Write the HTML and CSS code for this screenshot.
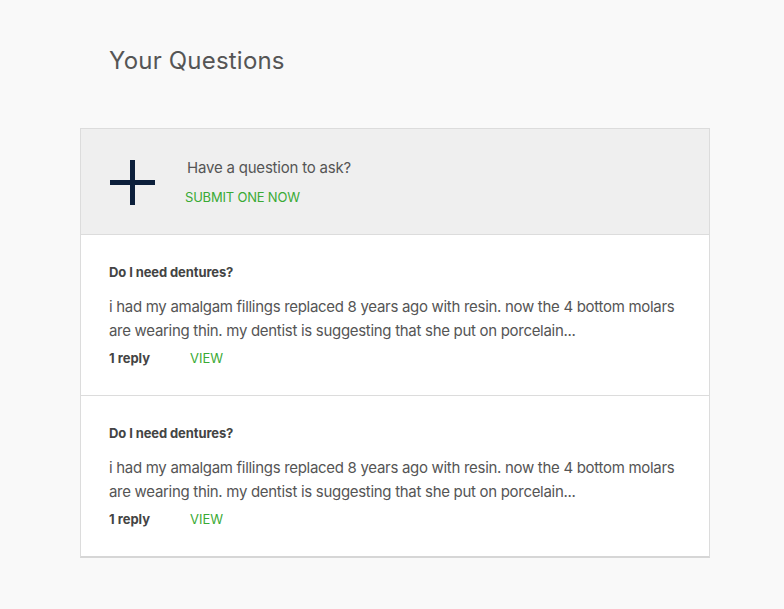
FILE: index.html
```html
<!DOCTYPE html>
<html>
<head>
<meta charset="utf-8">
<link rel="stylesheet" href="styles.css">
</head>
<body>
<div class="page">
  <h1 class="title">Your Questions</h1>
  <div class="card">
    <div class="ask">
      <svg class="plus" width="45" height="45" viewBox="0 0 45 45"><rect x="20" y="0" width="5" height="45" fill="#0c1f3b"/><rect x="0" y="20" width="45" height="5" fill="#0c1f3b"/></svg>
      <div class="ask-text">
        <div class="ask-q">Have a question to ask?</div>
        <a class="green ask-link">SUBMIT ONE NOW</a>
      </div>
    </div>
    <div class="item">
      <div class="item-title">Do I need dentures?</div>
      <p class="item-body">i had my amalgam fillings replaced 8 years ago with resin. now the 4 bottom molars are wearing thin. my dentist is suggesting that she put on porcelain...</p>
      <div class="item-meta"><span class="reply">1 reply</span><a class="green view">VIEW</a></div>
    </div>
    <div class="item">
      <div class="item-title">Do I need dentures?</div>
      <p class="item-body">i had my amalgam fillings replaced 8 years ago with resin. now the 4 bottom molars are wearing thin. my dentist is suggesting that she put on porcelain...</p>
      <div class="item-meta"><span class="reply">1 reply</span><a class="green view">VIEW</a></div>
    </div>
  </div>
</div>
</body>
</html>
```
FILE: styles.css
```css
html, body { margin: 0; padding: 0; }
body { background: #f9f9f9; font-family: Inter, "Open Sans", sans-serif; color: #555; }
.page { padding: 45px 74px 0 80px; width: 630px; }
.title { margin: 0 0 51px 29px; font-size: 24px; font-weight: 400; color: #555; line-height: 32px; letter-spacing: 0.2px; }
.card { background: #fff; border: 1px solid #dcdcdc; border-bottom: 2px solid #d6d6d6; }
.ask { background: #efefef; height: 105px; display: flex; align-items: flex-start; border-bottom: 1px solid #dcdcdc; }
.plus { margin: 31px 0 0 29px; }
.ask-text { margin: 29px 0 0 32px; }
.ask-q { font-size: 15px; color: #555; line-height: 20px; letter-spacing: -0.2px; }
.ask-link { display: block; margin-top: 11px; font-size: 13px; margin-left: -2px; letter-spacing: -0.2px; }
.green { color: #3aaa35; text-decoration: none; }
.item { padding: 28px 28px 28px 28px; height: 104px; border-bottom: 1px solid #dcdcdc; }
.item:last-child { border-bottom: none; }
.item-title { font-size: 13px; font-weight: 700; color: #444; line-height: 16px; margin-top: 1px; letter-spacing: -0.1px; }
.item-body { margin: 15px 0 0; font-size: 15px; line-height: 24px; color: #555; letter-spacing: -0.3px; }
.item-meta { margin-top: 6px; font-size: 13px; line-height: 18px; display: flex; }
.reply { font-weight: 700; color: #444; width: 81px; letter-spacing: 0; }
.view { font-size: 13px; }
```
